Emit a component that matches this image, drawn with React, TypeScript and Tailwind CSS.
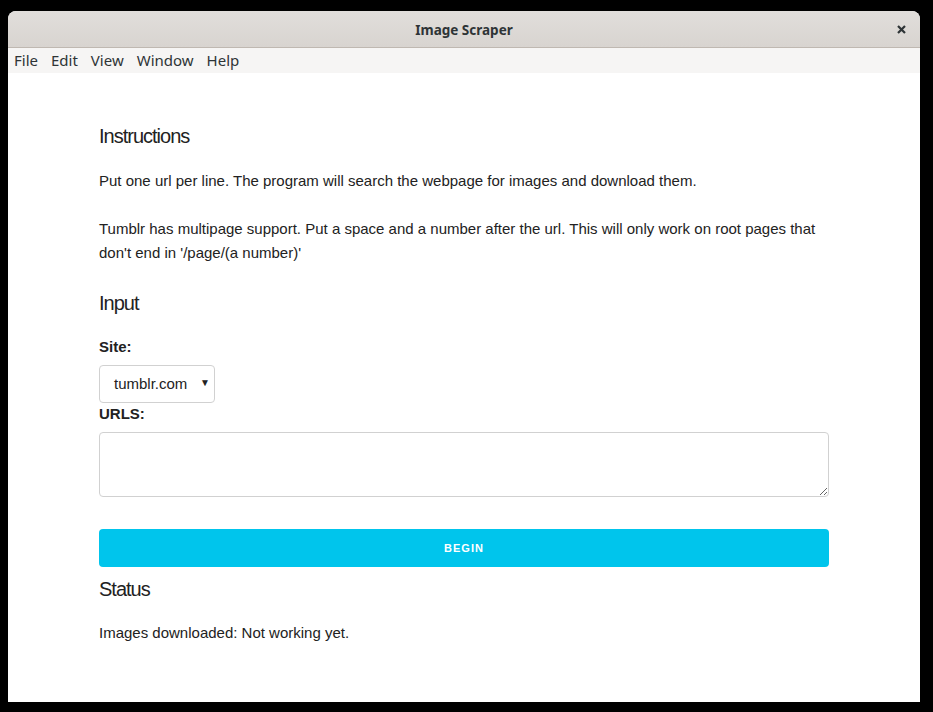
export default function App() {
    const sans = { fontFamily: '"Liberation Sans", Arial, sans-serif' };
    return (
        <div className="w-[933px] h-[712px] bg-black pt-[11px] px-[8px] overflow-hidden">
            <div className="w-[912px] h-[691px] bg-white rounded-t-[8px] overflow-hidden flex flex-col">
                {/* title bar */}
                <div className="h-[37px] shrink-0 bg-gradient-to-b from-[#e1dedb] to-[#d8d4d0] border-b border-[#bfb8b1] flex items-center relative pt-[2px]" style={{ fontFamily: '"Noto Sans", "DejaVu Sans", sans-serif' }}>
                    <div className="flex-1 text-center text-[13.5px] font-bold text-[#2e3436]">Image Scraper</div>
                    <svg className="absolute right-[14px] top-[14px]" width="9" height="9" viewBox="0 0 9 9">
                        <path d="M1 1 L8 8 M8 1 L1 8" stroke="#2e3436" strokeWidth="2.2" strokeLinecap="butt" />
                    </svg>
                </div>
                {/* menu bar */}
                <div className="h-[25px] shrink-0 bg-[#f6f5f4] flex items-center gap-[13px] pl-[6px] text-[15px] text-[#2e3436]" style={{ fontFamily: '"Noto Sans", "DejaVu Sans", sans-serif' }}>
                    <span>File</span>
                    <span>Edit</span>
                    <span>View</span>
                    <span>Window</span>
                    <span>Help</span>
                </div>
                {/* content */}
                <div className="flex-1 bg-white text-[#222] text-[15px]" style={sans}>
                    <div className="w-[730px] mx-auto pt-[48px]">
                        <h4 className="text-[20px] leading-[30px] tracking-[-1px]">Instructions</h4>
                        <p className="mt-[18px] leading-[24px]">Put one url per line. The program will search the webpage for images and download them.</p>
                        <p className="mt-[24px] leading-[24px] w-[720px]">Tumblr has multipage support. Put a space and a number after the url. This will only work on root pages that don't end in '/page/(a number)'</p>
                        <h4 className="mt-[23px] text-[20px] leading-[30px] tracking-[-1px]">Input</h4>
                        <label className="block mt-[19px] leading-[20px] font-bold">Site:</label>
                        <div className="relative mt-[8px] w-[116px] h-[38px] border border-[#d1d1d1] rounded-[4px] bg-white flex items-center pl-[14px]">
                            <span>tumblr.com</span>
                            <span className="absolute right-[4px] top-[9px] text-[10px] leading-[16px] text-[#222]">▼</span>
                        </div>
                        <label className="block mt-[1px] leading-[20px] font-bold">URLS:</label>
                        <textarea className="block mt-[8px] w-[730px] h-[65px] border border-[#d1d1d1] rounded-[4px] bg-white outline-none"></textarea>
                        <button className="mt-[32px] w-[730px] h-[38px] rounded-[4px] bg-[#00c5ec] text-white text-[11px] font-bold tracking-[1px] uppercase">Begin</button>
                        <h4 className="mt-[7px] text-[20px] leading-[30px] tracking-[-1px]">Status</h4>
                        <p className="mt-[17px] leading-[24px]">Images downloaded: Not working yet.</p>
                    </div>
                </div>
            </div>
        </div>
    );
}
